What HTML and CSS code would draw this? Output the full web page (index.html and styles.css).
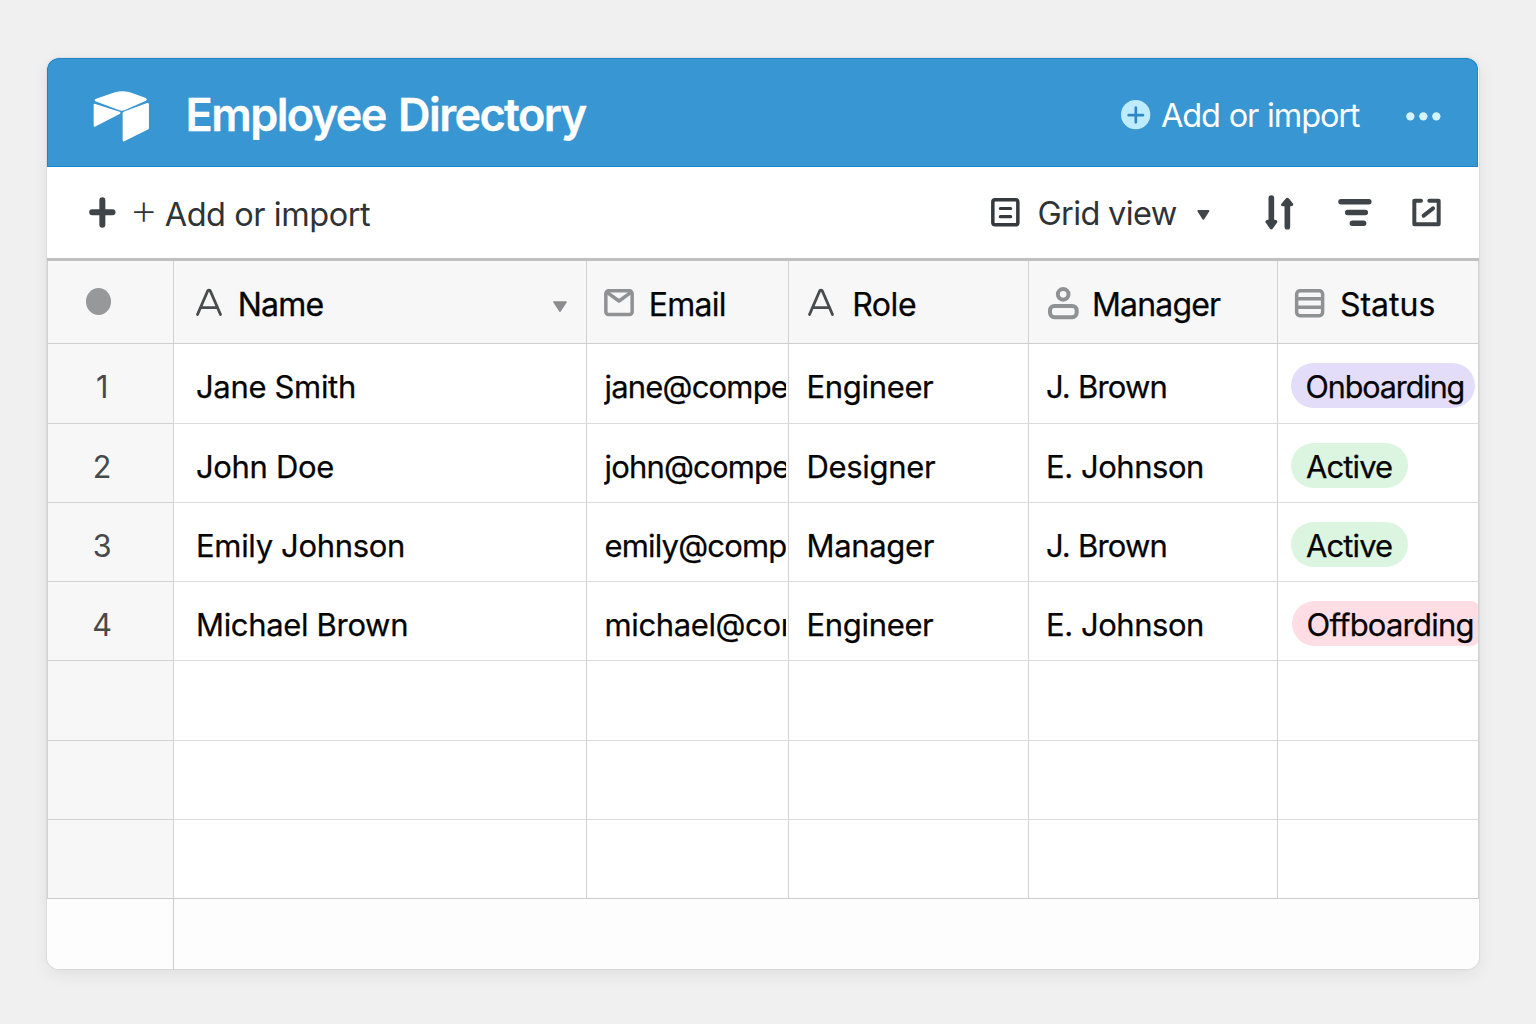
FILE: index.html
```html
<!DOCTYPE html>
<html lang="en">
<head>
<meta charset="utf-8">
<title>Employee Directory</title>
<link rel="stylesheet" href="styles.css">
</head>
<body>
<main class="card">
  <header class="topbar">
    <svg class="logo" viewBox="160 122 169 152" width="56.3" height="50.7" fill="#fff" stroke="#fff" stroke-width="4" stroke-linejoin="round">
      <path d="M168 147.500 L224 128 Q246 122 268 127 L318 145 Q321 147 318 149 L255 177 Q246 181 238 177 L168 151 Q166 149 168 147.500Z"/>
      <path d="M164 162 L239 186 Q242 187.500 239 189 L166 227 Q164 228 164 225Z"/>
      <path d="M251 189 Q251 186 254 185 L323 160 Q326 159 326 162 V232 Q326 235 324 236 L253 271 Q251 272 251 269Z"/>
    </svg>
    <h1 class="title">Employee Directory</h1>
    <button class="import">
      <svg viewBox="60 152 88 88" width="29.3" height="29.3"><circle cx="104" cy="196" r="44" fill="#bdebff"/><path d="M83 197.500H126M104.500 175V219" stroke="#2f86c2" stroke-width="8" stroke-linecap="round"/></svg>
      <span class="import-label">Add or import</span>
    </button>
    <svg class="dots" viewBox="918 187 104 26" width="34.7" height="8.7" fill="#d3f3ff"><circle cx="931" cy="200" r="12.500"/><circle cx="970" cy="200" r="12.500"/><circle cx="1009" cy="200" r="12.500"/></svg>
  </header>

  <div class="toolbar">
    <svg class="plus" viewBox="146 440 80 93" width="26.7" height="31"><path d="M155.500 486H216.500M186 449.500V523.500" stroke="#3e4447" stroke-width="18" stroke-linecap="round"/></svg>
    <span class="thin-plus">+</span>
    <span class="tool-add">Add or import</span>
    <svg class="view-icon" viewBox="63 55 86 86" width="28.7" height="28.7" fill="none" stroke="#33393c"><rect x="68.500" y="60.500" width="75" height="75" rx="7" stroke-width="10.500"/><path d="M91 86.500H122M91 111H122" stroke-width="9.500" stroke-linecap="round"/></svg>
    <span class="view-label">Grid view</span>
    <svg class="view-caret" viewBox="682 90 38 30" width="12.7" height="10"><path d="M686 93H716L701 116Z" fill="#414749" stroke="#414749" stroke-width="6" stroke-linejoin="round"/></svg>
    <svg class="sort" viewBox="107 43 86 104" width="28.7" height="34.7" fill="#3e4447" stroke="#3e4447" stroke-linejoin="round" stroke-linecap="round"><path d="M126 52V125M174 70V138" stroke-width="17"/><path d="M111 123Q112 120 116 120H136Q141 120 141 124L128 142Q126 144 124 142ZM158 72L171 56Q174 53 177 56L189 71Q189 74 185 74H162Q158 74 158 72Z" stroke-width="6"/></svg>
    <svg class="filter" viewBox="323 56 102 82" width="34" height="27.3" stroke="#3e4447" stroke-width="16.500" stroke-linecap="round"><path d="M332 64.500H415.500M352 96.500H405M366 129H400"/></svg>
    <svg class="open" viewBox="546 52 87 87" width="29" height="29" fill="none" stroke="#3e4447" stroke-width="12" stroke-linecap="round" stroke-linejoin="round"><path d="M573 60H553V131H626V60H598M581 105L609 83"/></svg>
  </div>

  <div class="grid">
    <div class="row head">
      <div class="cell idx"><i class="bullet"></i></div>
      <div class="cell name">
        <svg class="letter" viewBox="469 114 78 81" width="26" height="27"><path d="M473.500 190.500L504 120Q508 115 512 120L542.500 190.500M482 170H534" fill="none" stroke="#4a4b4c" stroke-width="8.500" stroke-linecap="round" stroke-linejoin="round"/></svg>
        <span class="label l-name">Name</span>
        <svg class="caret" viewBox="68 124 42 33" width="14" height="11"><path d="M71 127H107L89 154Z" fill="#8b8d8e" stroke="#8b8d8e" stroke-width="5" stroke-linejoin="round"/></svg>
      </div>
      <div class="cell email">
        <svg class="i-mail" viewBox="222 86 90 82" width="30" height="27.3" fill="none" stroke="#8f9192" stroke-width="10.500" stroke-linejoin="round"><rect x="227.500" y="91.500" width="79" height="71" rx="8"/><path d="M231 96L267 122L303 96"/></svg>
        <span class="label l-email">Email</span>
      </div>
      <div class="cell role">
        <svg class="letter" viewBox="469 114 78 81" width="26" height="27"><path d="M473.500 190.500L504 120Q508 115 512 120L542.500 190.500M482 170H534" fill="none" stroke="#4a4b4c" stroke-width="8.500" stroke-linecap="round" stroke-linejoin="round"/></svg>
        <span class="label l-role">Role</span>
      </div>
      <div class="cell mgr">
        <svg class="i-user" viewBox="84 80 92 96" width="30.7" height="32" fill="none" stroke="#8f9192" stroke-width="12"><circle cx="129.500" cy="102" r="16"/><rect x="90" y="137" width="80" height="33.500" rx="13"/></svg>
        <span class="label l-mgr">Manager</span>
      </div>
      <div class="cell status">
        <svg class="i-list" viewBox="106 87 88 85" width="29.3" height="28.3" fill="none" stroke="#8f9192" stroke-width="10.500"><rect x="111" y="92" width="78" height="75" rx="10"/><path d="M111 116H189M111 142H189"/></svg>
        <span class="label l-status">Status</span>
      </div>
    </div>
    <div class="row tall"><div class="cell idx">1</div><div class="cell name">Jane Smith</div><div class="cell email"><span class="clip">jane@compe</span></div><div class="cell role">Engineer</div><div class="cell mgr mj">J. Brown</div><div class="cell status"><span class="pill onboarding">Onboarding</span></div></div>
    <div class="row"><div class="cell idx">2</div><div class="cell name">John Doe</div><div class="cell email"><span class="clip">john@compe</span></div><div class="cell role">Designer</div><div class="cell mgr">E. Johnson</div><div class="cell status"><span class="pill active">Active</span></div></div>
    <div class="row"><div class="cell idx">3</div><div class="cell name">Emily Johnson</div><div class="cell email"><span class="clip">emily@comp</span></div><div class="cell role">Manager</div><div class="cell mgr mj">J. Brown</div><div class="cell status"><span class="pill active">Active</span></div></div>
    <div class="row"><div class="cell idx">4</div><div class="cell name">Michael Brown</div><div class="cell email"><span class="clip m">michael@com</span></div><div class="cell role">Engineer</div><div class="cell mgr">E. Johnson</div><div class="cell status"><span class="pill offboarding">Offboarding</span></div></div>
    <div class="row tall"><div class="cell idx"></div><div class="cell"></div><div class="cell"></div><div class="cell"></div><div class="cell"></div><div class="cell"></div></div>
    <div class="row"><div class="cell idx"></div><div class="cell"></div><div class="cell"></div><div class="cell"></div><div class="cell"></div><div class="cell"></div></div>
    <div class="row last"><div class="cell idx"></div><div class="cell"></div><div class="cell"></div><div class="cell"></div><div class="cell"></div><div class="cell"></div></div>
  </div>
  <footer class="foot"><div class="foot-idx"></div></footer>
</main>
</body>
</html>
```
FILE: styles.css
```css
* { box-sizing: border-box; }

body {
  margin: 0;
  width: 1536px;
  height: 1024px;
  padding: 58px 57px 55px 47px;
  background: #f0f0f0;
  font-family: Inter, "Liberation Sans", sans-serif;
  overflow: hidden;
}

svg { display: block; flex: none; overflow: visible; }

.card {
  width: 1432px;
  height: 911px;
  display: flex;
  flex-direction: column;
  background: #fff;
  border-radius: 12px;
  overflow: hidden;
  box-shadow: 0 0 2px rgba(0, 0, 0, .2), 0 5px 18px rgba(0, 0, 0, .07);
}

/* Blue bar */
.topbar {
  height: 109px;
  flex: none;
  display: flex;
  align-items: center;
  margin-right: 1px;
  padding: 0 37px 0 46.3px;
  background: #3896d3;
  border-radius: 12px 12px 0 0;
  box-shadow: inset 0 0 0 1px #1c86cd;
}
.logo { margin-top: 7px; }
.title {
  margin: 0 auto 0 36px;
  padding-top: 4px;
  font-size: 45px;
  font-weight: 600;
  letter-spacing: -1.6px;
  word-spacing: 2.5px;
  line-height: 60px;
  color: #fff;
  white-space: nowrap;
  -webkit-text-stroke: .3px #fff;
}
.import {
  display: flex;
  align-items: center;
  margin: 5px 47px 0 0;
  padding: 0;
  border: 0;
  background: none;
  font: inherit;
  color: #fff;
}
.import-label {
  margin-left: 11px;
  padding-top: 2px;
  font-size: 32.5px;
  line-height: 40px;
  letter-spacing: -1.15px;
  word-spacing: 1px;
  white-space: nowrap;
}
.dots { margin-top: 8px; }

/* Toolbar */
.toolbar {
  height: 91px;
  flex: none;
  display: flex;
  align-items: center;
  padding: 0 38px 0 41.5px;
  font-size: 32.5px;
  line-height: 40px;
  color: #303335;
  white-space: nowrap;
}
.thin-plus {
  width: 28px;
  margin: -7px 0 0 14px;
  font-size: 45px;
  font-weight: 200;
}
.tool-add { margin: 5px auto 0 7.5px; letter-spacing: -.45px; }
.view-icon { margin-top: 0; }
.view-label { margin: 3px 0 0 17.5px; letter-spacing: -.65px; }
.view-caret { margin: 5px 0 0 20.5px; }
.sort { margin-left: 55.5px; }
.filter { margin-left: 43.5px; }
.open { margin-left: 40.5px; }

/* Table */
.grid {
  flex: none;
  border-top: 3px solid #c0c0c0;
}
.row {
  height: 79px;
  display: grid;
  grid-template-columns: 127px 413px 202px 240px 249px 201px;
}
.tall { height: 80px; }
.cell {
  min-width: 0;
  display: flex;
  align-items: center;
  padding-top: 7px;
  border-right: 1px solid #d2d2d2;
  border-bottom: 1px solid #dcdcdc;
  font-size: 31px;
  line-height: 40px;
  color: #050505;
  white-space: nowrap;
  letter-spacing: -.33px;
  -webkit-text-stroke: .25px currentColor;
}
.idx {
  justify-content: center;
  padding-right: 17px;
  background: #f7f7f7;
  border-left: 1px solid #d2d2d2;
  border-bottom-color: #d2d2d2;
  color: #48494a;
  font-size: 30.5px;
  -webkit-text-stroke: 0;
}
.name { padding-left: 22px; }
.email { padding-left: 17.5px; padding-right: 2px; }
.role { padding-left: 17.5px; }
.mgr { padding-left: 17px; letter-spacing: -.45px; }
.mj { letter-spacing: -.8px; }
.status { padding-left: 13px; padding-top: 4px; overflow: hidden; }

.head { height: 83px; }
.head .cell {
  padding-top: 0;
  background: #f7f7f7;
  border-bottom-color: #cfcfcf;
  font-size: 32px;
}
.head .idx { padding-right: 24px; }
.bullet { width: 25.5px; height: 27px; border-radius: 50%; background: #969899; margin-top: -1px; }
.label { padding-top: 5px; }
.l-name { margin-left: 15.7px; letter-spacing: -.8px; -webkit-text-stroke: .35px currentColor; }
.l-email { margin-left: 15px; letter-spacing: -.75px; }
.l-role { margin-left: 18px; letter-spacing: -.45px; }
.l-mgr { margin-left: 13.7px; letter-spacing: -.8px; }
.l-status { margin-left: 15.3px; letter-spacing: 0; }
.caret { margin: 9px 19.5px 0 auto; }
.i-mail { margin: 1px 0 0 -.8px; }
.role .letter { margin-left: 1.7px; }
.i-user { margin: 1px 0 0 1.5px; }
.i-list { margin: 2px 0 0 4.3px; }

.clip { flex: 1; min-width: 0; overflow: hidden; letter-spacing: -.82px; padding-left: 1px; margin-left: -1px; }
.clip.m { letter-spacing: -.38px; }

.pill {
  flex: none;
  height: 45px;
  padding: 2px 15px 0;
  border-radius: 22.5px;
  line-height: 43px;
}
.onboarding { width: 184px; padding-left: 14.5px; background: #e4ddf9; font-size: 30.5px; letter-spacing: -1.08px; }
.active { width: 116.5px; background: #dcf5e0; letter-spacing: -.9px; }
.offboarding {
  width: 187px;
  margin-left: 1px;
  padding-left: 14.5px;
  padding-right: 0;
  border-radius: 22.5px 8px 8px 22.5px;
  background: #ffdde4;
  letter-spacing: -.77px;
}

.last .cell { border-bottom-color: #cbcbcb; }

.foot { flex: 1; background: #fdfdfd; }
.foot-idx { width: 127px; height: 100%; border-right: 1px solid #cdcdcd; }
```
